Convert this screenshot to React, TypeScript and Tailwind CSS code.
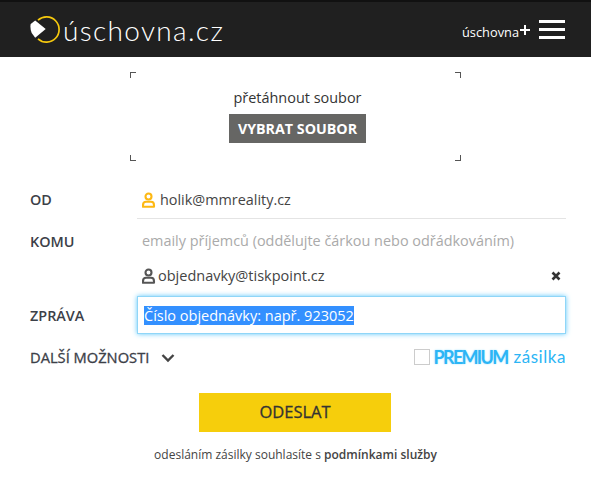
import React from "react";

function Person({ color }: { color: string }) {
  return (
    <svg width="14" height="16" viewBox="0 0 14 16" fill="none" stroke={color} strokeWidth="2.1">
      <circle cx="6.5" cy="4.5" r="3" />
      <path d="M1 14.8v-1.6c0-2 1.3-3.4 3-3.4h5c1.7 0 3 1.4 3 3.4v1.6z" strokeLinejoin="round" />
    </svg>
  );
}

function Corner({ className }: { className: string }) {
  return <span className={`absolute w-[6px] h-[6px] border-[#555] ${className}`} />;
}

export default function App() {
  return (
    <div className="w-[591px] h-[479px] bg-white overflow-hidden font-['Open_Sans',sans-serif] text-[#444]">
      <header className="h-[57px] bg-[#202020] border-t-2 border-[#111] flex items-center justify-between pl-[30px] pr-[26px]">
        <div className="flex items-center">
          <svg width="30" height="28" viewBox="0 0 30 28" fill="none">
            <path d="M8 4.2A12.6 12.6 0 1 1 8 22.8" stroke="#f6c90e" strokeWidth="1.7" />
            <path d="M.7 8L5.2 4.6L15.7 13L5.2 21.8L1.7 17Q-.2 12 .7 8z" fill="#fff" />
          </svg>
          <span className="ml-[3px] text-[28px] leading-none font-['Lato',sans-serif] font-light text-white tracking-[1.35px]">úschovna.cz</span>
        </div>
        <div className="flex items-center">
          <span className="text-[12.8px] text-white mt-[6px] mr-[1px]">úschovna</span>
          <svg width="10" height="10" viewBox="0 0 10 10" className="mr-[9px]">
            <path d="M5 0v10M0 5h10" stroke="#fff" strokeWidth="2" />
          </svg>
          <div className="flex flex-col gap-[5px] w-[26px]">
            <span className="h-[3px] bg-white" />
            <span className="h-[3px] bg-white" />
            <span className="h-[3px] bg-white" />
          </div>
        </div>
      </header>

      <div className="relative mx-[130px] mt-[15px] h-[89px] pl-[4px] flex flex-col items-center">
        <Corner className="left-0 top-0 border-l border-t" />
        <Corner className="right-0 top-0 border-r border-t" />
        <Corner className="left-0 bottom-0 border-l border-b" />
        <Corner className="right-0 bottom-0 border-r border-b" />
        <p className="mt-[17px] text-[14.45px] leading-[18px] text-[#333]">přetáhnout soubor</p>
        <button className="mt-[7px] w-[137px] h-[29px] bg-[#666664] text-white text-[14.25px] font-bold">VYBRAT SOUBOR</button>
      </div>

      <div className="mt-[21px] ml-[30px] mr-[25px] flex flex-col">
        <div className="flex h-[37px]">
          <span className="w-[107px] h-[36px] text-[14.4px] font-semibold leading-[36px] text-[#3c4048]">OD</span>
          <div className="flex-1 h-[37px] border-b border-[#e4e4e4] pl-[5px] flex items-center gap-[4px] pb-[1px]">
            <Person color="#fdb813" />
            <span className="text-[14.4px] text-[#444]">holik@mmreality.cz</span>
          </div>
        </div>
        <div className="flex h-[45px]">
          <span className="w-[107px] text-[14.4px] font-semibold leading-[45px] text-[#3c4048]">KOMU</span>
          <span className="pl-[5px] text-[14.43px] leading-[44px] text-[#aaa]">emaily příjemců (oddělujte čárkou nebo odřádkováním)</span>
        </div>
        <div className="flex h-[24px] pl-[107px]">
          <div className="flex-1 flex items-center pl-[5px] gap-[2px]">
            <Person color="#555" />
            <span className="text-[14.5px] text-[#444]">objednavky@tiskpoint.cz</span>
            <svg width="10" height="10" viewBox="0 0 10 10" className="ml-auto mr-[5px]">
              <path d="M1.5 1.5l7 7M8.5 1.5l-7 7" stroke="#333" strokeWidth="2.6" />
            </svg>
          </div>
        </div>
        <div className="flex mt-[8px] h-[38px]">
          <span className="w-[107px] text-[14.4px] font-semibold leading-[40px] text-[#3c4048]">ZPRÁVA</span>
          <div className="flex-1 border border-[#8fd6f8] shadow-[0_0_5px_#5cc8fb] pl-[6px] flex items-center">
            <span className="text-[14.5px] leading-[19px] bg-[#3390ff] text-white">Číslo objednávky: např. 923052</span>
          </div>
        </div>
        <div className="flex items-center justify-between mt-[12px] h-[22px]">
          <div className="flex items-center">
            <span className="text-[14.7px] text-[#3c4048] [-webkit-text-stroke:0.3px_#3c4048]">DALŠÍ MOŽNOSTI</span>
            <svg width="14" height="10" viewBox="0 0 14 10" className="ml-[12px] mt-[2px]" fill="none">
              <path d="M1.5 2l5.5 5.5L12.5 2" stroke="#444" strokeWidth="2.4" />
            </svg>
          </div>
          <div className="flex items-center">
            <span className="w-[16px] h-[16px] border border-[#ccc] mr-[4px]" />
            <span className="text-[18px] leading-[22px] font-['Lato',sans-serif] font-bold text-[#2cb5f5] tracking-[-1.7px] [text-shadow:0_0_2px_#9fe0ff]">PREMIUM</span>
            <span className="ml-[6px] text-[17px] leading-[22px] font-['Lato',sans-serif] text-[#2cb5f5] tracking-[0.55px]">zásilka</span>
          </div>
        </div>
      </div>

      <div className="flex justify-center mt-[25px] pr-[1px]">
        <button className="w-[192px] h-[39px] bg-[#f6ce0c] text-[16.5px] text-[#333] [-webkit-text-stroke:0.3px_#333]">ODESLAT</button>
      </div>
      <p className="mt-[14px] text-center text-[12px] leading-[18px] text-[#444]">
        odesláním zásilky souhlasíte s <span className="font-semibold">podmínkami služby</span>
      </p>
    </div>
  );
}
